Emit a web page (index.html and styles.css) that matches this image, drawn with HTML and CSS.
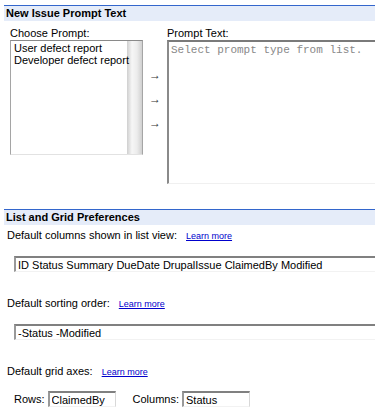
FILE: index.html
```html
<!DOCTYPE html>
<html lang="en">
<head>
    <meta charset="UTF-8">
    <title>Issue tracker settings</title>
    <link rel="stylesheet" href="styles.css">
</head>
<body>
    <div class="page">
        <div class="section-title">New Issue Prompt Text</div>
        <div class="prompt-editor">
            <div class="prompt-choose">
                <div class="label">Choose Prompt:</div>
                <div class="listbox">
                    <div class="option">User defect report</div>
                    <div class="option">Developer defect report</div>
                </div>
            </div>
            <div class="arrows">
                <span>&rarr;</span>
                <span>&rarr;</span>
                <span>&rarr;</span>
            </div>
            <div class="prompt-text">
                <div class="label">Prompt Text:</div>
                <textarea placeholder="Select prompt type from list."></textarea>
            </div>
        </div>

        <div class="section-title section-gap">List and Grid Preferences</div>
        <div class="pref">
            <div class="label">Default columns shown in list view: <a href="#" class="learn">Learn more</a></div>
            <input class="wide" type="text" value="ID Status Summary DueDate DrupalIssue ClaimedBy Modified">
        </div>
        <div class="pref">
            <div class="label">Default sorting order: <a href="#" class="learn">Learn more</a></div>
            <input class="wide" type="text" value="-Status -Modified">
        </div>
        <div class="pref">
            <div class="label">Default grid axes: <a href="#" class="learn">Learn more</a></div>
            <div class="axes">
                Rows: <input class="axis" type="text" value="ClaimedBy">
                <span class="axis-label">Columns:</span> <input class="axis" type="text" value="Status">
            </div>
        </div>
    </div>
</body>
</html>
```

FILE: styles.css
```css
*{
    margin: 0px;
    padding: 0px;
    box-sizing: border-box;
}
html, body{
    overflow: hidden;
    background: #fff;
}
body{
    font-family: "Liberation Sans", Arial, sans-serif;
    font-size: 11px;
    line-height: 13px;
    color: #000;
}
.page{
    padding: 5px 0px 0px 4px;
}
.section-title{
    border-top: 1px solid #3366cc;
    background-color: #e5ecf9;
    font-weight: bold;
    line-height: 15px;
    padding-left: 2px;
}
.section-gap{
    margin-top: 25px;
}
.prompt-editor{
    display: flex;
    margin-top: 6px;
    padding-left: 6px;
}
.prompt-choose{
    width: 133px;
    flex-shrink: 0;
}
.listbox{
    height: 115px;
    padding: 1px 0px 0px 3px;
    border: 1px solid #a5a5a5;
    border-top-color: #8a8a8a;
    border-bottom-color: #e2e2e2;
    background: linear-gradient(to right, #fff 116px, #cfcfcf 116px, #f6f6f6 121px, #ececec 126px, #d0d0d0 131px);
}
.option{
    line-height: 12px;
}
.arrows{
    width: 24px;
    flex-shrink: 0;
    display: flex;
    flex-direction: column;
    align-items: center;
    gap: 10px;
    padding-top: 41px;
}
.arrows span{
    font-size: 12px;
    line-height: 14px;
    color: #333;
}
.prompt-text{
    flex: 1;
}
.prompt-text textarea{
    display: block;
    width: 100%;
    height: 144px;
    padding: 2px 2px;
    resize: none;
    border: 1px solid #c8c8c8;
    border-top: 2px solid #7a7a7a;
    border-left: 2px solid #8a8a8a;
    border-right: 0px;
    border-bottom-color: #f0f0f0;
    font-family: "Liberation Mono", "Courier New", monospace;
    font-size: 11px;
    line-height: 12px;
    outline: none;
}
.prompt-text textarea::placeholder{
    color: #888;
}
.pref .label{
    padding-left: 3px;
    margin-top: 4px;
}
.pref + .pref .label{
    margin-top: 25px;
}
.learn{
    font-size: 9px;
    color: #0000cc;
    margin-left: 6px;
}
.pref input{
    display: block;
    height: 16px;
    padding: 0px 2px;
    margin-top: 13px;
    margin-left: 10px;
    border: 1px solid #d8d8d8;
    border-top: 2px solid #808080;
    border-left: 2px solid #999;
    border-bottom-color: #f2f2f2;
    font-family: "Liberation Sans", Arial, sans-serif;
    font-size: 11px;
    color: #000;
    outline: none;
}
.pref input.wide{
    width: calc(100% - 10px);
    border-right: 0px;
}
.axes{
    display: flex;
    align-items: center;
    margin-top: 12px;
    padding-left: 10px;
}
.pref .axes input.axis{
    display: inline-block;
    width: 68px;
    margin: 0px 0px 0px 3px;
}
.axis-label{
    margin-left: 17px;
}
```
